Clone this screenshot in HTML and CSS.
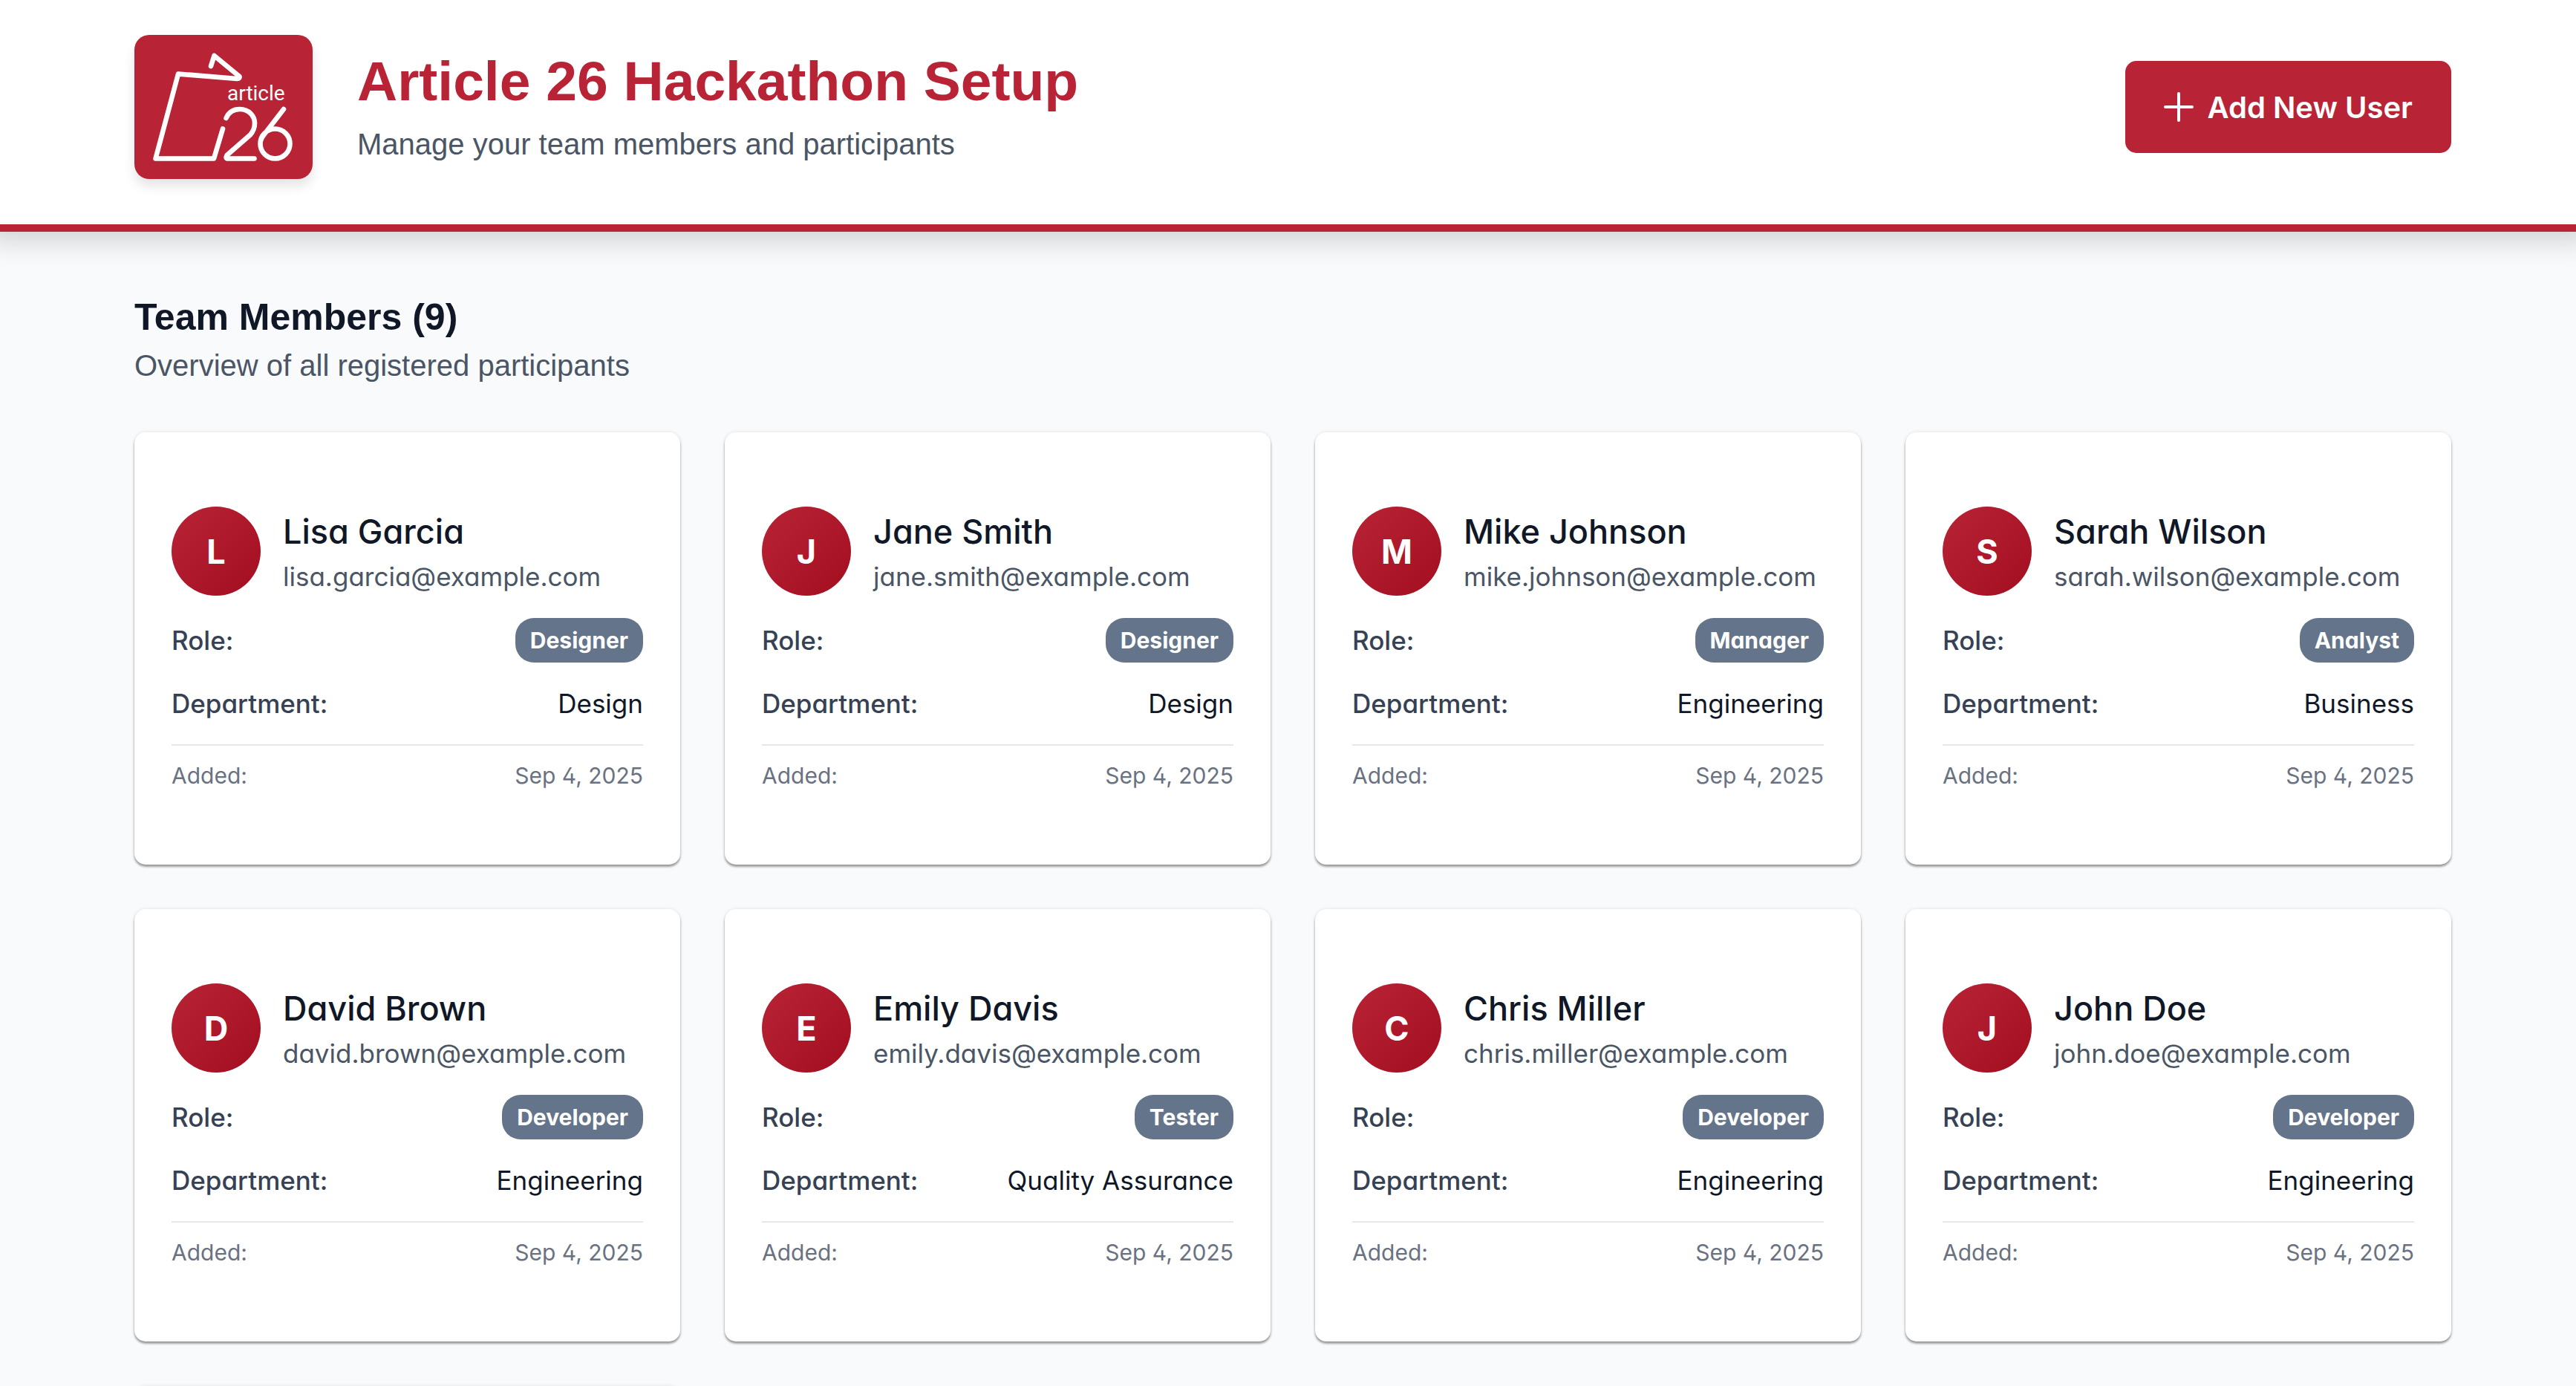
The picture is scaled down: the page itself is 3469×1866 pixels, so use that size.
FILE: index.html
```html
<!DOCTYPE html>
<html lang="en">
<head>
<meta charset="utf-8">
<meta name="viewport" content="width=device-width, initial-scale=1">
<title>Article 26 Hackathon Setup</title>
<link rel="stylesheet" href="styles.css">
</head>
<body>
<header class="site-header">
  <div class="brand">
    <svg class="logo" viewBox="0 0 240 194" role="img" aria-label="Article 26">
      <rect width="240" height="194" fill="#b82436"/>
      <g fill="none" stroke="#fff" stroke-width="6.6" stroke-linecap="round" stroke-linejoin="round">
        <path d="M103 42 L107.500 28 L141.500 56 Q142 59 138 59 L59 52.500 L28.500 166.500 H107 L119 126.500"/>
        <path d="M123.500 112 C127 104 134 100 142 100 C154 100 162 109 162 119 C162 125 160 130 156 134.500 L124.500 162 Q122 166.500 126 166.500 H161.500"/>
        <path d="M201 100 L174 135 M209.500 146.500 A20 20 0 1 1 169.500 146.500 A20 20 0 1 1 209.500 146.500 M174 135 Q169.500 141 169.500 146.500"/>
      </g>
      <text class="logo-word" x="125" y="88">article</text>
    </svg>
    <div class="brand-text">
      <h1 class="title">Article 26 Hackathon Setup</h1>
      <p class="lead">Manage your team members and participants</p>
    </div>
  </div>
  <button class="add-button" type="button">
    <svg class="add-icon" viewBox="0 0 40 40" aria-hidden="true"><path d="M20 2 V38 M2 20 H38" fill="none" stroke="#fff" stroke-width="4" stroke-linecap="round"/></svg>
    Add New User
  </button>
</header>
<main class="content">
  <div class="section-head">
    <h2 class="section-title">Team Members (9)</h2>
    <p class="lead">Overview of all registered participants</p>
  </div>
  <div class="grid">
    <article class="card">
      <div class="person"><div class="avatar">L</div><div><h3 class="name">Lisa Garcia</h3><p class="email">lisa.garcia@example.com</p></div></div>
      <dl class="facts"><div class="row role"><dt>Role:</dt><dd class="badge">Designer</dd></div><div class="row dept"><dt>Department:</dt><dd>Design</dd></div><div class="row added"><dt>Added:</dt><dd>Sep 4, 2025</dd></div></dl>
    </article>
    <article class="card">
      <div class="person"><div class="avatar">J</div><div><h3 class="name">Jane Smith</h3><p class="email">jane.smith@example.com</p></div></div>
      <dl class="facts"><div class="row role"><dt>Role:</dt><dd class="badge">Designer</dd></div><div class="row dept"><dt>Department:</dt><dd>Design</dd></div><div class="row added"><dt>Added:</dt><dd>Sep 4, 2025</dd></div></dl>
    </article>
    <article class="card">
      <div class="person"><div class="avatar">M</div><div><h3 class="name">Mike Johnson</h3><p class="email">mike.johnson@example.com</p></div></div>
      <dl class="facts"><div class="row role"><dt>Role:</dt><dd class="badge">Manager</dd></div><div class="row dept"><dt>Department:</dt><dd>Engineering</dd></div><div class="row added"><dt>Added:</dt><dd>Sep 4, 2025</dd></div></dl>
    </article>
    <article class="card">
      <div class="person"><div class="avatar">S</div><div><h3 class="name">Sarah Wilson</h3><p class="email">sarah.wilson@example.com</p></div></div>
      <dl class="facts"><div class="row role"><dt>Role:</dt><dd class="badge">Analyst</dd></div><div class="row dept"><dt>Department:</dt><dd>Business</dd></div><div class="row added"><dt>Added:</dt><dd>Sep 4, 2025</dd></div></dl>
    </article>
    <article class="card">
      <div class="person"><div class="avatar">D</div><div><h3 class="name">David Brown</h3><p class="email">david.brown@example.com</p></div></div>
      <dl class="facts"><div class="row role"><dt>Role:</dt><dd class="badge">Developer</dd></div><div class="row dept"><dt>Department:</dt><dd>Engineering</dd></div><div class="row added"><dt>Added:</dt><dd>Sep 4, 2025</dd></div></dl>
    </article>
    <article class="card">
      <div class="person"><div class="avatar">E</div><div><h3 class="name">Emily Davis</h3><p class="email">emily.davis@example.com</p></div></div>
      <dl class="facts"><div class="row role"><dt>Role:</dt><dd class="badge">Tester</dd></div><div class="row dept"><dt>Department:</dt><dd>Quality Assurance</dd></div><div class="row added"><dt>Added:</dt><dd>Sep 4, 2025</dd></div></dl>
    </article>
    <article class="card">
      <div class="person"><div class="avatar">C</div><div><h3 class="name">Chris Miller</h3><p class="email">chris.miller@example.com</p></div></div>
      <dl class="facts"><div class="row role"><dt>Role:</dt><dd class="badge">Developer</dd></div><div class="row dept"><dt>Department:</dt><dd>Engineering</dd></div><div class="row added"><dt>Added:</dt><dd>Sep 4, 2025</dd></div></dl>
    </article>
    <article class="card">
      <div class="person"><div class="avatar">J</div><div><h3 class="name">John Doe</h3><p class="email">john.doe@example.com</p></div></div>
      <dl class="facts"><div class="row role"><dt>Role:</dt><dd class="badge">Developer</dd></div><div class="row dept"><dt>Department:</dt><dd>Engineering</dd></div><div class="row added"><dt>Added:</dt><dd>Sep 4, 2025</dd></div></dl>
    </article>
    <article class="card"></article>
  </div>
</main>
</body>
</html>
```
FILE: styles.css
```css
* { box-sizing: border-box; margin: 0; }
body {
  height: 100vh;
  overflow: hidden;
  background: #f9fafc;
  color: #101828;
  font-family: "Liberation Sans", Arial, sans-serif;
}
.site-header {
  position: relative;
  display: flex;
  align-items: center;
  justify-content: space-between;
  padding: 47px 168px 61px 181px;
  border-bottom: 10px solid #b82436;
  background: #fff;
  box-shadow: 0 -10px 38px 20px rgba(0, 0, 0, 0.18);
}
.brand { display: flex; align-items: center; gap: 60px; }
.logo {
  display: block;
  width: 240px;
  height: 194px;
  border-radius: 20px;
  box-shadow: 0 10px 15px rgba(0, 0, 0, 0.1);
}
.logo-word { font: 400 28px "Roboto", sans-serif; fill: #fff; }
.title { color: #b82436; font-size: 75px; line-height: 90px; font-weight: 700; }
.lead { color: #4a5565; font-size: 40px; line-height: 60px; }
.brand-text .lead { margin-top: 10px; }
.add-button {
  display: flex;
  align-items: center;
  gap: 18px;
  height: 124px;
  padding: 0 52px;
  border: 0;
  border-radius: 15px;
  background: #b82436;
  color: #fff;
  font: 600 40px "Inter", sans-serif;
}
.add-icon { width: 40px; height: 40px; }
.content { padding: 80px 168px 60px 181px; }
.section-title { font-size: 50px; line-height: 70px; font-weight: 700; }
.section-head { margin-bottom: 60px; }
.grid { display: grid; grid-template-columns: repeat(4, 1fr); gap: 60px; }
.card {
  padding: 100px 50px;
  border-radius: 15px;
  background: #fff;
  box-shadow: 0 0 5px rgba(0, 0, 0, 0.1), 0 3px 3px rgba(0, 0, 0, 0.36);
  font-family: "Inter", sans-serif;
  font-feature-settings: "cv02", "cv03", "cv04", "cv11";
}
.person { display: flex; align-items: center; gap: 30px; margin-bottom: 30px; }
.avatar {
  display: grid;
  place-items: center;
  width: 120px;
  height: 120px;
  border-radius: 50%;
  background: linear-gradient(135deg, #b82436, #a30d20);
  color: #fff;
  font-size: 45px;
  font-weight: 700;
}
.name { font-size: 45px; line-height: 60px; font-weight: 500; }
.email { margin-top: 8px; color: #4a5565; font-size: 35px; line-height: 44px; }
.facts { margin: 0; }
.row { display: flex; align-items: center; justify-content: space-between; }
.row dd { margin: 0; }
.role, .dept { font-size: 35px; line-height: 50px; }
.role { margin-bottom: 30px; }
.role dt, .dept dt { color: #364153; font-weight: 500; }
.row .badge {
  padding: 0 20px;
  border-radius: 25px;
  background: #64748b;
  color: #fff;
  font-size: 30px;
  line-height: 60px;
  font-weight: 700;
}
.added {
  margin-top: 30px;
  padding-top: 20px;
  border-top: 2px solid #e5e7eb;
  color: #6a7282;
  font-size: 30px;
  line-height: 40px;
}
```
